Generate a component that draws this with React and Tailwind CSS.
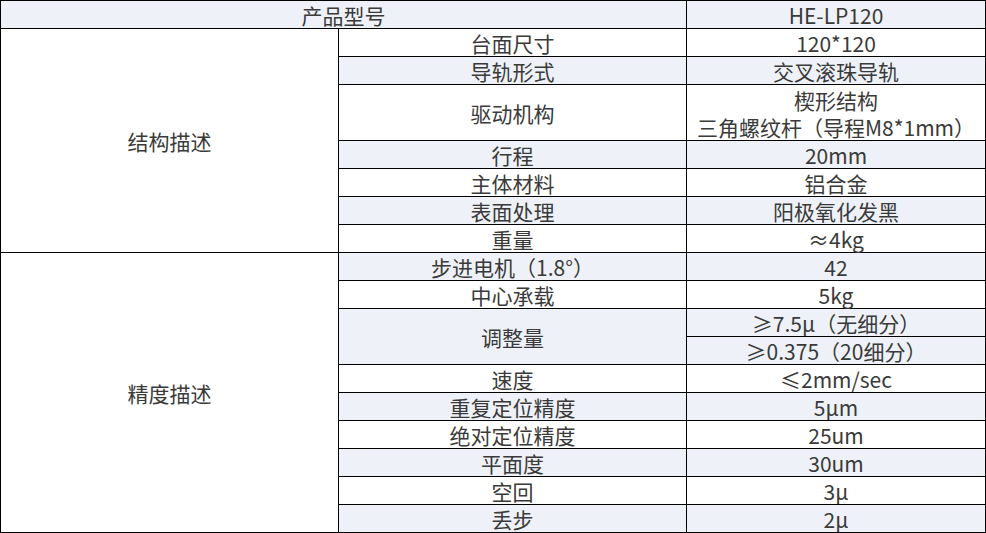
import React from "react";

const B = "bg-[#eef2f8]";
const W = "bg-white";

const cell =
  "border-r border-b border-black flex flex-col items-center justify-center text-center leading-[27px] pt-[2px]";

const C = ({ children, className = "" }) => (
  <div className={`${cell} ${className}`}>{children}</div>
);

export default function App() {
  return (
    <div
      className="w-[986px] h-[533px] bg-white text-[#3a3a3a] text-[21px] overflow-hidden"
      style={{ fontFamily: '"Noto Sans CJK SC", "Noto Sans", sans-serif' }}
    >
      <div className="grid grid-cols-[338px_348px_299px] grid-rows-[repeat(19,28px)] border-l border-t border-black w-[986px]">
        <C className={`col-span-2 ${B}`}>产品型号</C>
        <C className={B}>HE-LP120</C>

        <C className="row-span-8 bg-white">结构描述</C>
        <C className={W}>台面尺寸</C>
        <C className={W}>120*120</C>
        <C className={B}>导轨形式</C>
        <C className={B}>交叉滚珠导轨</C>
        <C className={`row-span-2 ${W}`}>驱动机构</C>
        <C className={`row-span-2 ${W}`}>
          <div>楔形结构</div>
          <div>三角螺纹杆（导程M8*1mm）</div>
        </C>
        <C className={B}>行程</C>
        <C className={B}>20mm</C>
        <C className={W}>主体材料</C>
        <C className={W}>铝合金</C>
        <C className={B}>表面处理</C>
        <C className={B}>阳极氧化发黑</C>
        <C className={W}>重量</C>
        <C className={W}>≈4kg</C>

        <C className="row-span-10 bg-white">精度描述</C>
        <C className={B}>步进电机（1.8°）</C>
        <C className={B}>42</C>
        <C className={W}>中心承载</C>
        <C className={W}>5kg</C>
        <C className={`row-span-2 ${B}`}>调整量</C>
        <C className={B}>≥7.5μ（无细分）</C>
        <C className={B}>≥0.375（20细分）</C>
        <C className={W}>速度</C>
        <C className={W}>≤2mm/sec</C>
        <C className={B}>重复定位精度</C>
        <C className={B}>5μm</C>
        <C className={W}>绝对定位精度</C>
        <C className={W}>25um</C>
        <C className={B}>平面度</C>
        <C className={B}>30um</C>
        <C className={W}>空回</C>
        <C className={W}>3μ</C>
        <C className={B}>丢步</C>
        <C className={B}>2μ</C>
      </div>
    </div>
  );
}
